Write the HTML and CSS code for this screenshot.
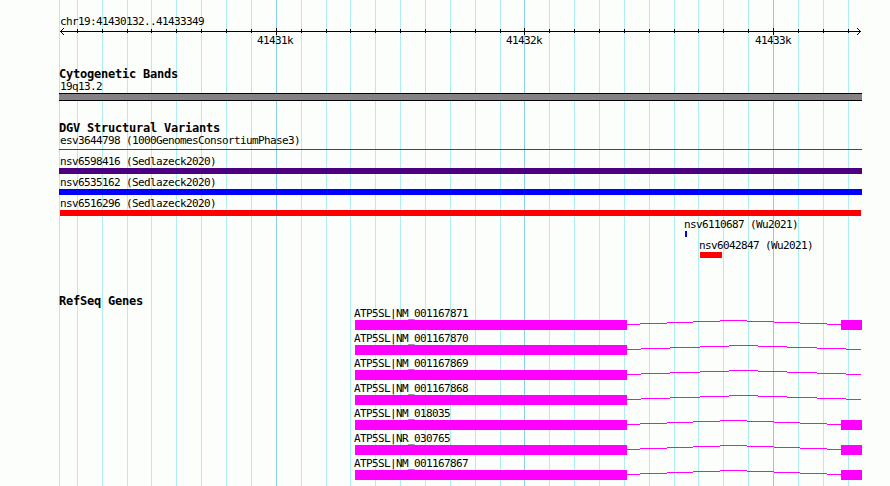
FILE: index.html
```
<!DOCTYPE html>
<html lang="en">
<head>
  <meta charset="UTF-8">
  <title>chr19:41430132..41433349</title>
  <link rel="stylesheet" href="styles.css">
</head>
<body>

  <div class="browser">
    <svg class="grid" width="890" height="486" shape-rendering="crispEdges">
      <path class="minor" d="M59.5 0v486M77.5 0v486M102.5 0v486M127.5 0v486M151.5 0v486M176.5 0v486M201.5 0v486M226.5 0v486M251.5 0v486M301.5 0v486M326.5 0v486M350.5 0v486M375.5 0v486M400.5 0v486M425.5 0v486M450.5 0v486M475.5 0v486M500.5 0v486M549.5 0v486M574.5 0v486M599.5 0v486M624.5 0v486M649.5 0v486M674.5 0v486M698.5 0v486M723.5 0v486M748.5 0v486M798.5 0v486M823.5 0v486M848.5 0v486" />
      <path class="major" d="M276.5 0v486M524.5 0v486M773.5 0v486" />
    </svg>

    <svg class="intron-defs" width="0" height="0">
      <defs>
        <path id="intron-inner" d="M0 4.5h13M13 3.5h27M40 2.5h26M66 1.5h27M93 .5h27M120 1.5h27M147 2.5h26M173 3.5h27M200 4.5h14" />
        <path id="intron-open" d="M0 4.5h14M14 3.5h29M43 2.5h30M73 1.5h29M102 .5h29M131 1.5h29M160 2.5h30M190 3.5h29M219 4.5h15" />
      </defs>
    </svg>

    <div class="content">
      <div class="scale">
        <div class="label region">chr19:41430132..41433349</div>
        <svg class="ruler" width="803" height="7" shape-rendering="crispEdges">
          <path d="M1 3.5h801" />
          <path d="M18.5 1v4M43.5 1v4M68.5 1v4M92.5 1v4M117.5 1v4M142.5 1v4M167.5 1v4M192.5 1v4M242.5 1v4M267.5 1v4M291.5 1v4M316.5 1v4M341.5 1v4M366.5 1v4M391.5 1v4M416.5 1v4M441.5 1v4M490.5 1v4M515.5 1v4M540.5 1v4M565.5 1v4M590.5 1v4M615.5 1v4M639.5 1v4M664.5 1v4M689.5 1v4M739.5 1v4M764.5 1v4M789.5 1v4" />
          <path d="M217.5 0v7M465.5 0v7M714.5 0v7" />
          <path d="M4 .5h1M3 1.5h1M2 2.5h1M2 4.5h1M3 5.5h1M4 6.5h1M798 .5h1M799 1.5h1M800 2.5h1M800 4.5h1M799 5.5h1M798 6.5h1" />
        </svg>
        <div class="ticks">
          <span class="label">41431k</span>
          <span class="label">41432k</span>
          <span class="label">41433k</span>
        </div>
      </div>

      <div class="track">
        <div class="title">Cytogenetic Bands</div>
        <div class="label">19q13.2</div>
        <div class="band"></div>
      </div>

      <div class="track variants">
        <div class="title">DGV Structural Variants</div>
        <div class="label">esv3644798 (1000GenomesConsortiumPhase3)</div>
        <div class="bar thin"></div>
        <div class="label">nsv6598416 (Sedlazeck2020)</div>
        <div class="bar complex"></div>
        <div class="label">nsv6535162 (Sedlazeck2020)</div>
        <div class="bar gain"></div>
        <div class="label">nsv6516296 (Sedlazeck2020)</div>
        <div class="bar loss inset"></div>
        <div class="wu-first">
          <div class="label">nsv6110687 (Wu2021)</div>
          <div class="bar gain tiny"></div>
        </div>
        <div class="wu-second">
          <div class="label">nsv6042847 (Wu2021)</div>
          <div class="bar loss short"></div>
        </div>
      </div>

      <div class="track genes">
        <div class="title">RefSeq Genes</div>
        <div class="gene">
          <div class="label">ATP5SL|NM_001167871</div>
          <div class="model"><i class="exon"></i><svg class="intron" width="214" height="10"><use href="#intron-inner" /></svg><i class="exon last"></i></div>
        </div>
        <div class="gene">
          <div class="label">ATP5SL|NM_001167870</div>
          <div class="model"><i class="exon"></i><svg class="intron" width="234" height="10"><use href="#intron-open" /></svg></div>
        </div>
        <div class="gene">
          <div class="label">ATP5SL|NM_001167869</div>
          <div class="model"><i class="exon"></i><svg class="intron" width="234" height="10"><use href="#intron-open" /></svg></div>
        </div>
        <div class="gene">
          <div class="label">ATP5SL|NM_001167868</div>
          <div class="model"><i class="exon"></i><svg class="intron" width="234" height="10"><use href="#intron-open" /></svg></div>
        </div>
        <div class="gene">
          <div class="label">ATP5SL|NM_018035</div>
          <div class="model"><i class="exon"></i><svg class="intron" width="214" height="10"><use href="#intron-inner" /></svg><i class="exon last"></i></div>
        </div>
        <div class="gene">
          <div class="label">ATP5SL|NR_030765</div>
          <div class="model"><i class="exon"></i><svg class="intron" width="214" height="10"><use href="#intron-inner" /></svg><i class="exon last"></i></div>
        </div>
        <div class="gene">
          <div class="label">ATP5SL|NM_001167867</div>
          <div class="model"><i class="exon"></i><svg class="intron" width="214" height="10"><use href="#intron-inner" /></svg><i class="exon last"></i></div>
        </div>
      </div>
    </div>
  </div>

</body>
</html>
```

FILE: styles.css
```
html, body {
  margin: 0;
  background: #fcfefc;
}

.browser {
  position: relative;
  width: 890px;
  height: 486px;
  overflow: hidden;
  color: #000;
  font-family: "DejaVu Sans Mono", "Liberation Mono", monospace;
}

/* vertical guide lines behind the tracks */
.grid {
  position: absolute;
  top: 0;
  left: 0;
  fill: none;
}

.minor {
  stroke: #afeeee;
}

.major {
  stroke: #87ceeb;
}

.intron-defs {
  position: absolute;
}

.content {
  position: relative;
  width: 803px;
  padding-left: 59px;
}

.label {
  height: 13px;
  padding: 2px 0 0 1px;
  font-size: 11px;
  line-height: 13px;
  letter-spacing: -0.622px;
  white-space: pre;
}

.title {
  height: 11px;
  font-size: 12px;
  font-weight: bold;
  line-height: 14px;
  letter-spacing: -0.224px;
  white-space: pre;
}

/* scale */
.scale {
  height: 54px;
  padding-top: 13px;
}

.ruler {
  display: block;
  fill: none;
  stroke: #000;
}

.ticks {
  display: flex;
  gap: 212px;
  margin-top: -3px;
  padding-left: 197px;
}

.ticks .label {
  width: 36px;
}

.band {
  height: 6px;
  border: solid #000;
  border-width: 1px 0;
  background: #848284;
}

/* variants */
.variants {
  margin-top: 20px;
}

.bar {
  height: 6px;
}

.complex {
  background: #4b0082;
}

.gain {
  background: #0000ff;
}

.loss {
  background: #ff0000;
}

.thin {
  height: 1px;
  margin: 2px 0 3px;
  background: #e60012;
}

.inset {
  margin: 0 1px;
}

.wu-first {
  padding-left: 625px;
}

.wu-second {
  padding-left: 640px;
}

.wu-first .label,
.wu-second .label,
.gene .label {
  padding-left: 0;
}

.tiny {
  width: 2px;
  margin-left: 1px;
}

.short {
  width: 22px;
  margin-left: 1px;
}

/* genes */
.genes {
  margin-top: 36px;
}

.gene {
  padding-left: 295px;
}

.model {
  display: flex;
  height: 10px;
  padding-left: 1px;
}

.exon {
  width: 272px;
  background: #ff00ff;
}

.last {
  width: 21px;
}

.intron {
  display: block;
  fill: none;
  stroke: #ff00ff;
  shape-rendering: crispEdges;
}
```
